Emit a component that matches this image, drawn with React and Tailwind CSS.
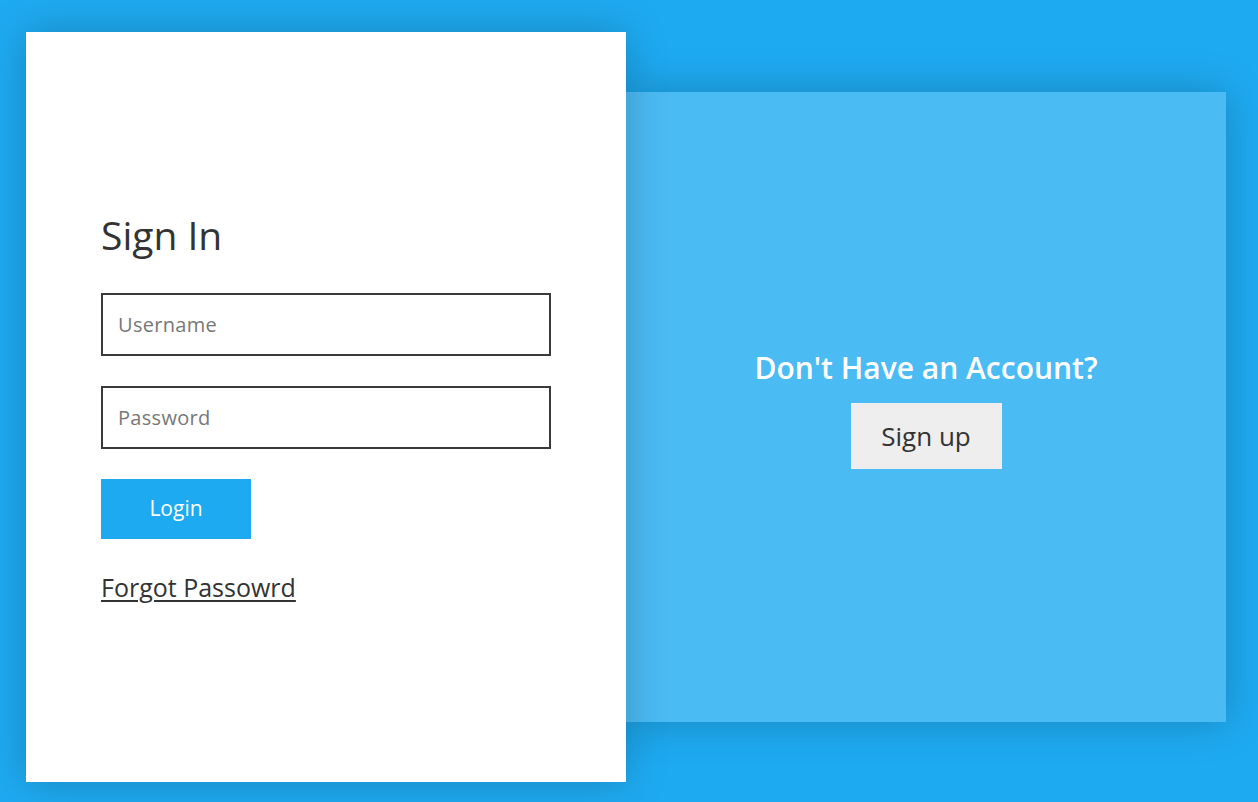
export default function App() {
  const font = { fontFamily: '"Open Sans", "Noto Sans", Arial, sans-serif' };
  return (
    <div
      className="h-[802px] w-[1258px] overflow-hidden bg-[#1eaaf1] pl-[26px] pt-[32px] flex items-start"
      style={font}
    >
      <div className="relative z-10 w-[600px] h-[750px] bg-white shadow-[0_0_40px_rgba(0,0,0,0.22)] flex flex-col pt-[181px] px-[75px]">
        <h1 className="h-[44px] text-[39px] leading-[44px] text-[#333] font-medium mb-[36px]">Sign In</h1>
        <input
          placeholder="Username"
          className="w-[450px] h-[63px] border-2 border-[#3a3a3a] px-[15px] text-[20px] tracking-[0.3px] text-[#333] placeholder:text-[#777] outline-none mb-[30px]"
        />
        <input
          placeholder="Password"
          className="w-[450px] h-[63px] border-2 border-[#3a3a3a] px-[15px] text-[20px] tracking-[0.3px] text-[#333] placeholder:text-[#777] outline-none mb-[30px]"
        />
        <button className="w-[150px] h-[60px] bg-[#1eaaf1] text-white text-[21px] mb-[33px]">Login</button>
        <a href="#" className="text-[25px] leading-[30px] text-[#333] underline underline-offset-[3px] decoration-[1.5px] self-start">Forgot Passowrd</a>
      </div>
      <div className="mt-[60px] w-[600px] h-[630px] bg-[#4bbbf4] shadow-[0_0_40px_rgba(0,0,0,0.22)] flex flex-col items-center pt-[258px]">
        <h2 className="h-[36px] text-[30px] leading-[36px] text-white font-semibold mb-[17px]">Don't Have an Account?</h2>
        <button className="w-[151px] h-[66px] bg-[#eeeeee] text-[#333] text-[26px]">Sign up</button>
      </div>
    </div>
  );
}
